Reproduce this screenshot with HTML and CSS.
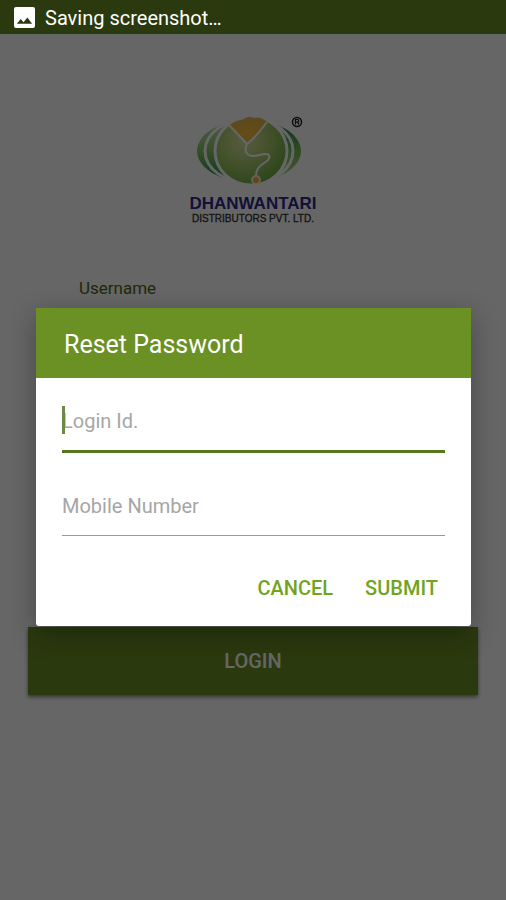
FILE: index.html
```
<!DOCTYPE html>
<html lang="en">
<head>
  <meta charset="UTF-8">
  <meta name="viewport" content="width=device-width, initial-scale=1.0">
  <title>Dhanwantari Distributors</title>
  <link rel="stylesheet" href="styles.css">
</head>
<body>
  <header class="status-bar">
    <svg class="status-icon" viewBox="0 0 22 22" aria-hidden="true">
      <rect width="22" height="22" rx="2" fill="#fff"/>
      <path d="M3 17.500L7 12.500l3 3.500L14 11l5 6.500z" fill="#2a3a0e"/>
    </svg>
    <span>Saving screenshot…</span>
  </header>

  <main class="screen">
    <div class="login">
      <div class="logo">
        <svg class="logo-mark" viewBox="0 0 112 72" role="img" aria-label="Dhanwantari logo">
          <defs>
            <radialGradient id="globe" cx="0.4" cy="0.35" r="0.65">
              <stop offset="0" stop-color="#dce6a4"/>
              <stop offset="0.6" stop-color="#a4c866"/>
              <stop offset="1" stop-color="#70b044"/>
            </radialGradient>
            <radialGradient id="heart" cx="0.5" cy="0.6" r="0.6">
              <stop offset="0" stop-color="#ffc03c"/>
              <stop offset="1" stop-color="#e4b44c"/>
            </radialGradient>
            <linearGradient id="leaf-left" x1="0" y1="0" x2="0" y2="1">
              <stop offset="0" stop-color="#c4e4b4"/>
              <stop offset="0.5" stop-color="#8ac660"/>
              <stop offset="1" stop-color="#188454"/>
            </linearGradient>
            <linearGradient id="leaf-right" x1="0" y1="0" x2="0" y2="1">
              <stop offset="0" stop-color="#108054"/>
              <stop offset="0.5" stop-color="#78bc58"/>
              <stop offset="1" stop-color="#b4d894"/>
            </linearGradient>
          </defs>
          <!-- outer leaves -->
          <path d="M52 4A52 31 0 0 0 52 66z" fill="url(#leaf-left)"/>
          <path d="M52 4A52 31 0 0 1 52 66z" fill="url(#leaf-right)"/>
          <!-- inner leaves -->
          <path d="M52 3A44 32 0 0 0 52 67z" fill="url(#leaf-left)"/>
          <path d="M54 3A41 32 0 0 1 54 67z" fill="url(#leaf-right)"/>
          <path d="M52 3A44 32 0 0 0 52 67M54 3A42 32 0 0 1 54 67" fill="none" stroke="#fff" stroke-width="3"/>
          <!-- globe -->
          <ellipse cx="54" cy="35" rx="36" ry="34" fill="url(#globe)" stroke="#fff" stroke-width="3"/>
          <path d="M33 9Q40 3 45 5Q50 -1 57 2Q64 0 70 6L51 27z" fill="url(#heart)"/>
          <path d="M31 8L50 28Q58 22 70 6M50 28C45 38 54 42 62 39C72 36 75 40 70 45C62 50 58 54 59 62" fill="none" stroke="#fff" stroke-width="2"/>
          <circle cx="59" cy="64" r="4" fill="#f8b43b" stroke="#fff0cc" stroke-width="2"/>
          <circle cx="100" cy="6" r="4.500" fill="none" stroke="#222" stroke-width="1.500"/>
          <path d="M98.500 8.500V3.500h2a1.300 1.300 0 0 1 0 2.600h-2m2 0l1.500 2.400" fill="none" stroke="#222" stroke-width="1.200"/>
        </svg>
        <div class="logo-name">DHANWANTARI</div>
        <div class="logo-sub">DISTRIBUTORS PVT. LTD.</div>
      </div>

      <form class="login-form">
        <div class="login-field">
          <label for="username">Username</label>
          <input id="username" type="text">
        </div>
        <button class="login-button" type="button">LOGIN</button>
      </form>
    </div>

    <div class="scrim">
      <form class="dialog" role="dialog" aria-labelledby="dialog-title">
        <h1 class="dialog-title" id="dialog-title">Reset Password</h1>
        <div class="dialog-body">
          <div class="field field-active">
            <input type="text" placeholder="Login Id." aria-label="Login Id.">
            <span class="cursor"></span>
          </div>
          <div class="field">
            <input type="tel" placeholder="Mobile Number" aria-label="Mobile Number">
          </div>
        </div>
        <div class="dialog-actions">
          <button type="button">CANCEL</button>
          <button type="button">SUBMIT</button>
        </div>
      </form>
    </div>
  </main>
</body>
</html>
```
FILE: styles.css
```
* {
  box-sizing: border-box;
}
body {
  margin: 0;
  min-height: 100vh;
  display: flex;
  flex-direction: column;
  font-family: Roboto, "Liberation Sans", sans-serif;
  font-size: 20px;
  background-color: #fff;
}
input, button {
  font: inherit;
  border: 0;
  padding: 0;
  outline: 0;
  background: none;
}

/* status bar */
.status-bar {
  display: flex;
  align-items: center;
  gap: 10px;
  height: 34px;
  padding: 0 14px;
  background-color: #2a3a0e;
  color: #fff;
}
.status-icon {
  width: 21px;
  height: 21px;
}
.status-bar span {
  padding-top: 2px;
}

/* login screen */
.screen {
  position: relative;
  flex: 1;
}
.login {
  padding: 82px 28px 0;
}
.logo {
  display: flex;
  flex-direction: column;
  align-items: center;
  font-family: "Liberation Sans", Arial, sans-serif;
}
.logo-mark {
  width: 112px;
  height: 72px;
}
.logo-name {
  margin-top: 6px;
  font-size: 17px;
  line-height: 20px;
  font-weight: bold;
  color: #2c2a8c;
}
.logo-sub {
  font-size: 10px;
  line-height: 10px;
  color: #333;
  -webkit-text-stroke: 0.3px #333;
}
.login-form {
  display: flex;
  flex-direction: column;
  padding-top: 54px;
}
.login-field {
  display: flex;
  flex-direction: column;
  height: 349px;
  padding: 0 51px;
}
.login-field label {
  font-size: 17px;
  line-height: 20px;
  color: #4d6a19;
}
.login-field input {
  height: 48px;
}
.login-button {
  height: 68px;
  background-color: #6b9023;
  color: #fff;
  font-weight: 500;
  box-shadow: 0 2px 4px rgba(0, 0, 0, 0.5);
}

/* reset password dialog */
.scrim {
  position: absolute;
  inset: 0;
  display: flex;
  align-items: center;
  padding: 0 35px 0 36px;
  background-color: rgba(0, 0, 0, 0.6);
}
.dialog {
  flex: 1;
  background-color: #fff;
  border-radius: 3px;
  box-shadow: 0 8px 28px rgba(0, 0, 0, 0.3);
}
.dialog-title {
  margin: 0;
  padding: 4px 28px 0;
  font-size: 25px;
  line-height: 66px;
  font-weight: 400;
  color: #fff;
  background-color: #6b9023;
}
.dialog-body {
  padding: 12px 26px 0;
}
.field {
  position: relative;
  margin-bottom: 22px;
  border-bottom: 1px solid #999;
}
.field input {
  display: block;
  width: 100%;
  height: 60px;
  padding-top: 2px;
}
.field input::placeholder {
  color: #a6a6a6;
  opacity: 1;
}
.field-active {
  border-bottom: 3px solid #57771c;
}
.cursor {
  position: absolute;
  left: 0;
  top: 16px;
  width: 3px;
  height: 28px;
  background-color: #6b8846;
}
.dialog-actions {
  display: flex;
  justify-content: flex-end;
  gap: 32px;
  padding: 6px 33px 14px;
}
.dialog-actions button {
  height: 48px;
  font-weight: 500;
  color: #71a41c;
}
```
